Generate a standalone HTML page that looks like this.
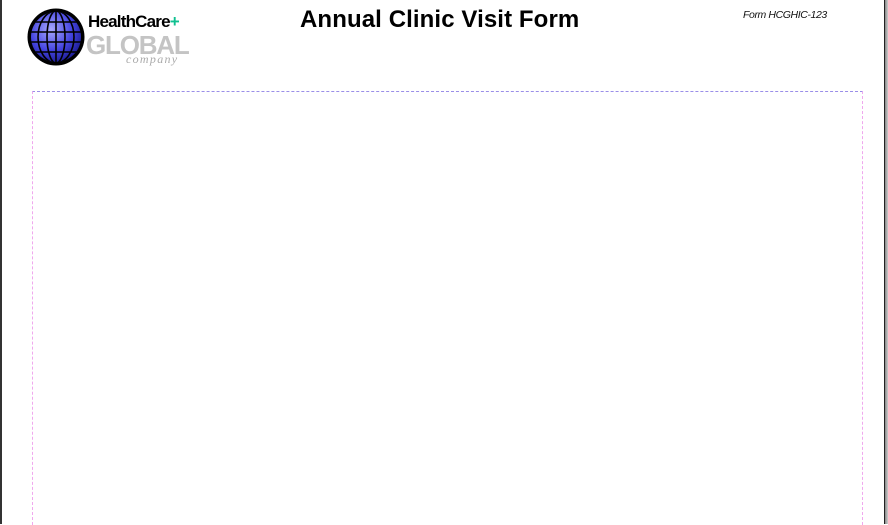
<!DOCTYPE html>
<html><head><style>
html,body{margin:0;padding:0;width:888px;height:524px;overflow:hidden;background:#fff;font-family:"Liberation Sans",sans-serif}
.lb{position:absolute;left:0;top:0;width:2px;height:524px;background:#333}
.rb{position:absolute;left:884px;top:0;width:1px;height:524px;background:#222}
.rs{position:absolute;left:885px;top:0;width:3px;height:524px;background:linear-gradient(90deg,#888,#ccc)}
.box{position:absolute;left:32px;top:91px;width:829px;height:433px;border-left:1px dashed #f0a8ee;border-right:1px dashed #f0a8ee;border-top:1px dashed #9a8ee8}
.title{position:absolute;left:300px;top:6px;font-size:24px;font-weight:bold;color:#000;letter-spacing:0.1px}
.form{position:absolute;left:743px;top:9px;font-size:10.5px;font-style:italic;letter-spacing:-0.4px;color:#111}
.hc{position:absolute;left:88px;top:12px;font-size:17px;font-weight:bold;letter-spacing:-0.8px;color:#000}
.hc span{color:#10c090}
.gl{position:absolute;left:86px;top:30px;font-size:26px;font-weight:bold;color:#c4c4c4;letter-spacing:-1.2px}
.co{position:absolute;left:126px;top:52px;font-family:"Liberation Serif",serif;font-style:italic;font-size:12px;color:#aaa;letter-spacing:1.3px}
</style></head><body>
<div class="lb"></div><div class="rb"></div><div class="rs"></div>
<svg style="position:absolute;left:27px;top:8px" width="58" height="58" viewBox="0 0 58 58">
<defs><radialGradient id="g" cx="0.4" cy="0.35" r="0.7"><stop offset="0" stop-color="#a8a8ff"/><stop offset="0.6" stop-color="#4444e0"/><stop offset="1" stop-color="#1a1a90"/></radialGradient>
<clipPath id="c"><circle cx="29" cy="29" r="25"/></clipPath></defs>
<circle cx="29" cy="29" r="28.5" fill="#000"/>
<circle cx="29" cy="29" r="25" fill="url(#g)"/>
<g clip-path="url(#c)" stroke="#000" stroke-width="1.6" fill="none">
<line x1="0" y1="14" x2="58" y2="14"/><line x1="0" y1="24" x2="58" y2="24"/><line x1="0" y1="34" x2="58" y2="34"/><line x1="0" y1="44" x2="58" y2="44"/>
<line x1="29" y1="0" x2="29" y2="58"/>
<ellipse cx="29" cy="29" rx="9" ry="26"/><ellipse cx="29" cy="29" rx="18" ry="26"/>
</g></svg>
<div class="hc">HealthCare<span>+</span></div>
<div class="gl">GLOBAL</div>
<div class="co">company</div>
<div class="title">Annual Clinic Visit Form</div>
<div class="form">Form HCGHIC-123</div>
<div class="box"></div>
</body></html>
